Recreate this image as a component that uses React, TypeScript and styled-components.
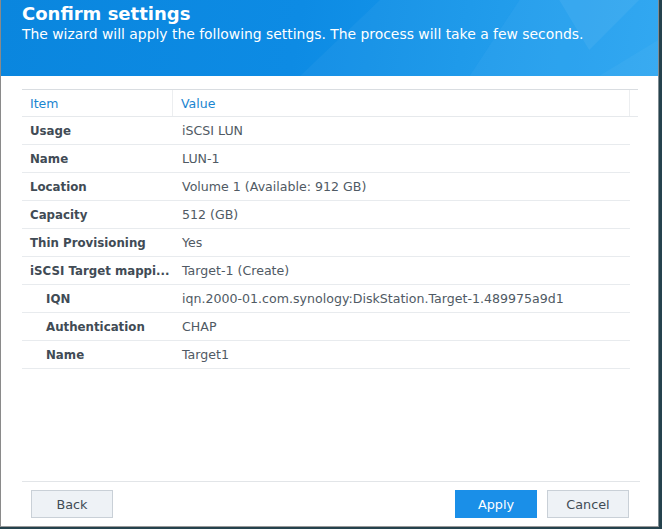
import styled, { createGlobalStyle } from "styled-components";

const GlobalStyle = createGlobalStyle`
    html, body {
        margin: 0;
        padding: 0;
        background: #25424d;
    }
    * {
        box-sizing: border-box;
    }
`;

type Row = { label: string; value: string; sub?: boolean };

const rows: Row[] = [
    { label: "Usage", value: "iSCSI LUN" },
    { label: "Name", value: "LUN-1" },
    { label: "Location", value: "Volume 1 (Available: 912 GB)" },
    { label: "Capacity", value: "512 (GB)" },
    { label: "Thin Provisioning", value: "Yes" },
    { label: "iSCSI Target mappi...", value: "Target-1 (Create)" },
    { label: "IQN", value: "iqn.2000-01.com.synology:DiskStation.Target-1.489975a9d1", sub: true },
    { label: "Authentication", value: "CHAP", sub: true },
    { label: "Name", value: "Target1", sub: true },
];

function App() {
    return <>
        <GlobalStyle />
        <Window>
            <Header>
                <Facets viewBox="0 0 659 76" preserveAspectRatio="none">
                    <polygon points="380,0 520,0 470,76 300,76" fill="#ffffff" opacity="0.04" />
                    <polygon points="520,0 659,0 659,40 600,76 470,76" fill="#ffffff" opacity="0.07" />
                    <polygon points="600,76 659,40 659,76" fill="#ffffff" opacity="0.1" />
                    <polygon points="560,0 640,0 590,50" fill="#ffffff" opacity="0.06" />
                </Facets>
                <Title>Confirm settings</Title>
                <Subtitle>The wizard will apply the following settings. The process will take a few seconds.</Subtitle>
            </Header>
            <Body>
                <Table>
                    <HeadRow>
                        <HeadCell $first>Item</HeadCell>
                        <HeadCell>Value</HeadCell>
                        <HeadFiller />
                    </HeadRow>
                    {rows.map((r, i) => (
                        <DataRow key={i}>
                            <LabelCell $sub={r.sub}>{r.label}</LabelCell>
                            <ValueCell>{r.value}</ValueCell>
                        </DataRow>
                    ))}
                </Table>
            </Body>
            <Footer>
                <Button>Back</Button>
                <Spacer />
                <Button $primary>Apply</Button>
                <Button>Cancel</Button>
            </Footer>
        </Window>
    </>;
}

const Window = styled.div`
    display: flex;
    flex-direction: column;
    width: 659px;
    height: 527px;
    background: #ffffff;
    border-left: 1px solid #8a8a8a;
    border-right: 1px solid #7f8c92;
    border-bottom: 1px solid #9a9a9a;
    font-family: "DejaVu Sans", Verdana, sans-serif;
`;

const Header = styled.div`
    position: relative;
    height: 76px;
    padding: 2px 21px 0;
    color: #ffffff;
    background: linear-gradient(100deg, #0a86de 0%, #0d8be4 45%, #1696ea 70%, #23a2f0 100%);
    overflow: hidden;
`;

const Facets = styled.svg`
    position: absolute;
    inset: 0;
    width: 100%;
    height: 100%;
`;

const Title = styled.div`
    position: relative;
    font-size: 18px;
    font-weight: bold;
    line-height: 23px;
`;

const Subtitle = styled.div`
    position: relative;
    font-size: 13.9px;
    line-height: 18px;
`;

const Body = styled.div`
    flex: 1;
    padding: 13px 20px 0 21px;
`;

const Table = styled.div`
    display: flex;
    flex-direction: column;
`;

const HeadRow = styled.div`
    display: flex;
    height: 28px;
    border-top: 1px solid #d9dde1;
    border-bottom: 1px solid #e6e9ec;
`;

const HeadCell = styled.div<{ $first?: boolean }>`
    display: flex;
    align-items: center;
    width: ${p => (p.$first ? "151px" : "457px")};
    padding-left: ${p => (p.$first ? "8px" : "8px")};
    border-right: 1px solid #eceef0;
    color: #1a85d0;
    font-size: 12.5px;
`;

const HeadFiller = styled.div`
    flex: 1;
`;

const DataRow = styled.div`
    display: flex;
    width: 608px;
    height: 28px;
    border-bottom: 1px solid #e8ebee;
`;

const LabelCell = styled.div<{ $sub?: boolean }>`
    display: flex;
    align-items: center;
    width: 151px;
    padding-left: ${p => (p.$sub ? "24px" : "8px")};
    color: #414b55;
    font-size: 11.8px;
    font-weight: bold;
    white-space: nowrap;
    overflow: hidden;
`;

const ValueCell = styled.div`
    display: flex;
    align-items: center;
    padding-left: 9px;
    color: #505a64;
    font-size: 12.6px;
    white-space: nowrap;
`;

const Footer = styled.div`
    display: flex;
    gap: 10px;
    margin: 0 18px 0 21px;
    padding: 8px 11px 8px 9px;
    border-top: 1px solid #e2e5e8;
`;

const Spacer = styled.div`
    flex: 1;
`;

const Button = styled.button<{ $primary?: boolean }>`
    width: 82px;
    height: 28px;
    border: 1px solid ${p => (p.$primary ? "#1a8fe8" : "#c9d0d7")};
    border-radius: 0;
    background: ${p => (p.$primary ? "#1a8fe8" : "#eef2f6")};
    color: ${p => (p.$primary ? "#ffffff" : "#414b55")};
    font-family: "DejaVu Sans", Verdana, sans-serif;
    font-size: 12.8px;
    cursor: pointer;
`;

export default App;
